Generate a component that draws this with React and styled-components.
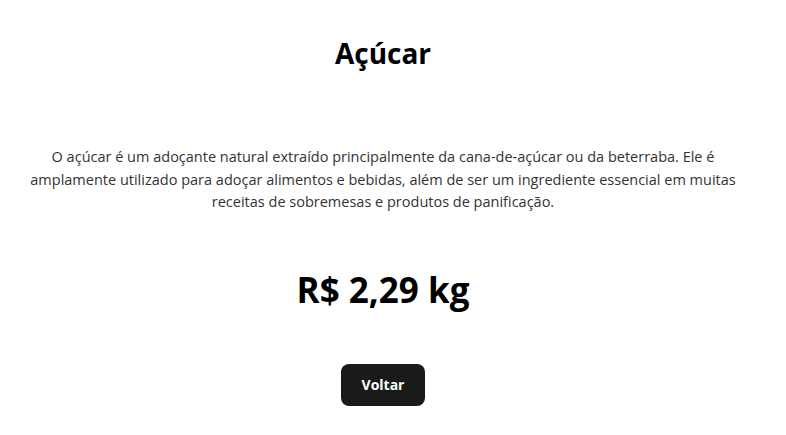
import React from 'react';
import styled, { createGlobalStyle } from 'styled-components';

const GlobalStyle = createGlobalStyle`
  body {
    margin: 0;
    background: #ffffff;
    font-family: "Open Sans", "Noto Sans", "Liberation Sans", sans-serif;
  }
`;

const Page = styled.main`
  display: flex;
  flex-direction: column;
  align-items: center;
  padding: 36px 30px 0 10px;
  text-align: center;
`;

const Title = styled.h1`
  margin: 0;
  font-size: 28px;
  line-height: 34px;
  font-weight: 700;
  color: #000;
`;

const Description = styled.p`
  margin: 76px 0 0;
  max-width: 720px;
  font-size: 14.5px;
  line-height: 22.5px;
  color: #333;
`;

const Price = styled.h2`
  margin: 54px 0 0;
  font-size: 35px;
  line-height: 44px;
  font-weight: 700;
  color: #000;
`;

const BackButton = styled.button`
  margin-top: 52px;
  width: 84px;
  height: 42px;
  border: none;
  border-radius: 8px;
  background: #1a1a1a;
  color: #fff;
  font-family: inherit;
  font-size: 14px;
  font-weight: 700;
  cursor: pointer;
`;

const ProductDetail = ({ product }) => (
  <Page>
    <Title>{product.name}</Title>
    <Description>{product.description}</Description>
    <Price>R$ {product.price} {product.unit}</Price>
    <BackButton>Voltar</BackButton>
  </Page>
);

const sugar = {
  name: 'Açúcar',
  description:
    'O açúcar é um adoçante natural extraído principalmente da cana-de-açúcar ou da beterraba. Ele é amplamente utilizado para adoçar alimentos e bebidas, além de ser um ingrediente essencial em muitas receitas de sobremesas e produtos de panificação.',
  price: '2,29',
  unit: 'kg',
};

export default function App() {
  return (
    <>
      <GlobalStyle />
      <ProductDetail product={sugar} />
    </>
  );
}
